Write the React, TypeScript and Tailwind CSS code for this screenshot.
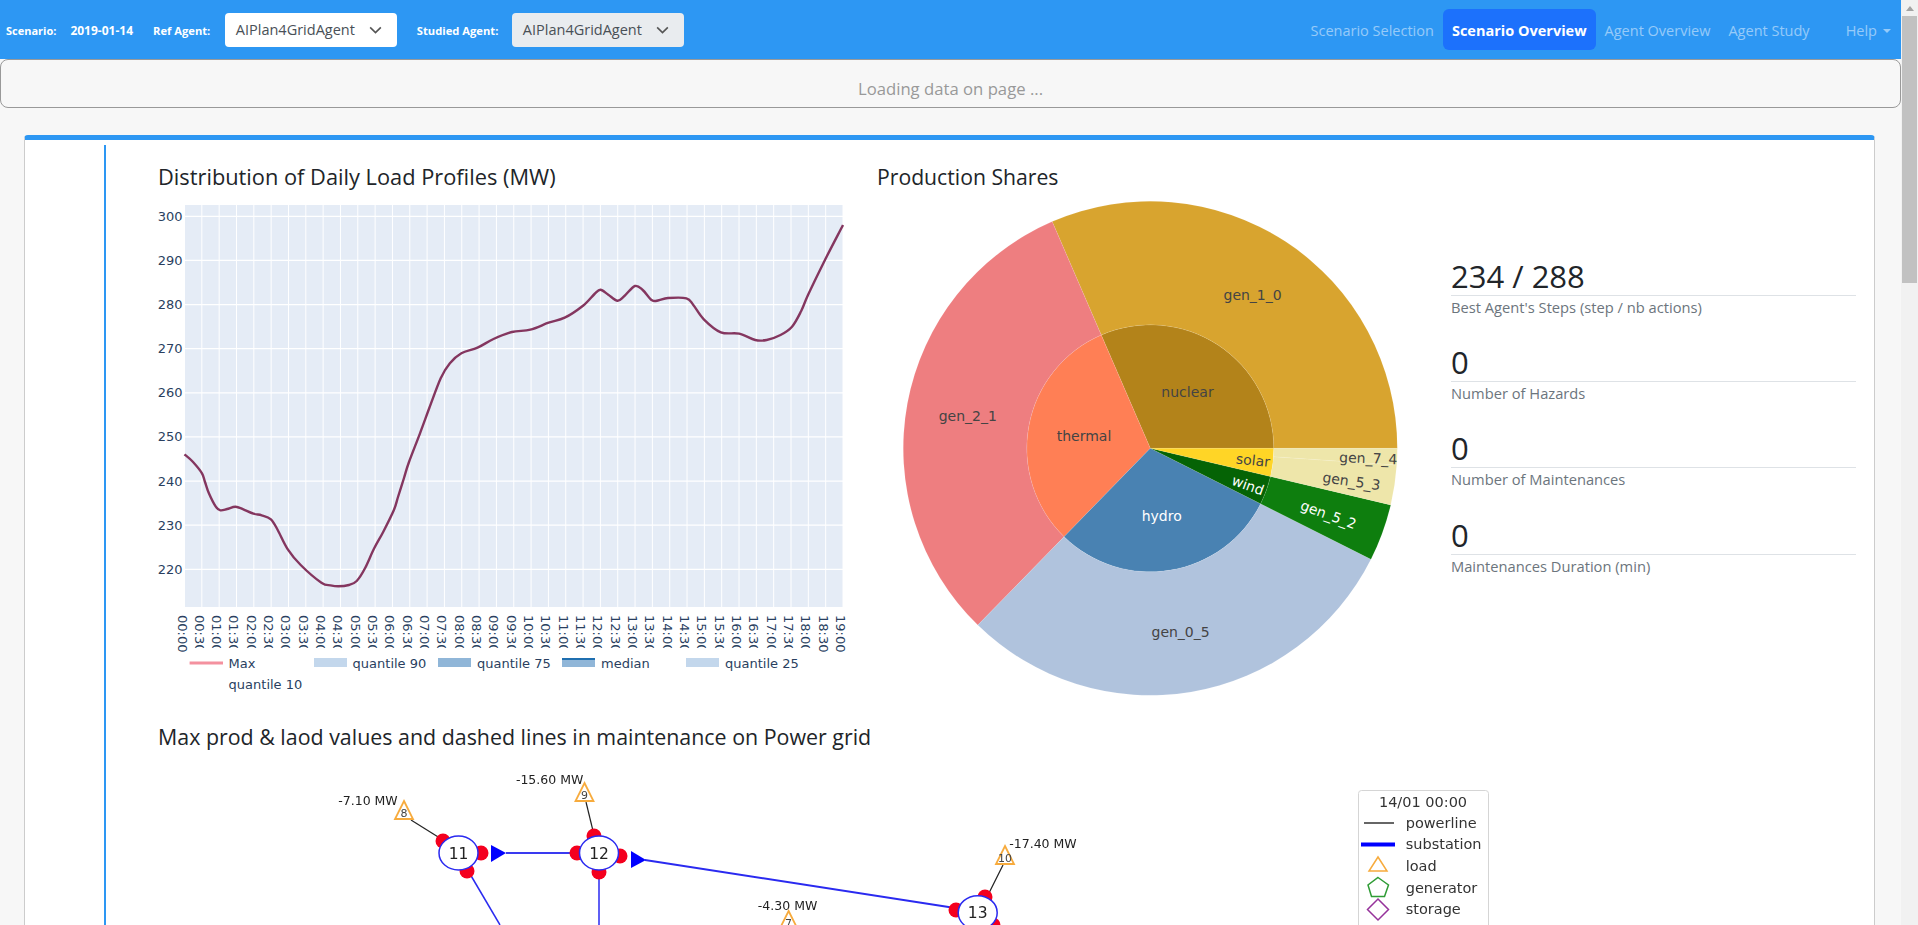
const FONT_UI = "font-['Open_Sans','Noto_Sans',sans-serif]";

const NAV_LINKS = [
  { label: "Scenario Selection" },
  { label: "Scenario Overview", active: true },
  { label: "Agent Overview" },
  { label: "Agent Study" },
];

const STATS = [
  { value: "234 / 288", label: "Best Agent's Steps (step / nb actions)" },
  { value: "0", label: "Number of Hazards" },
  { value: "0", label: "Number of Maintenances" },
  { value: "0", label: "Maintenances Duration (min)" },
];

// times on the x axis, every 30 minutes
const TICKS = Array.from({ length: 39 }, (_, i) => {
  const h = Math.floor(i / 2);
  return `${String(h).padStart(2, "0")}:${i % 2 ? "30" : "00"}`;
});

// curve traced from the plot, in page pixels
const CURVE: [number, number][] = [
  [184.5, 454.3], [192.8, 461.7], [202, 473.3], [205, 482], [208.9, 493.3], [215.8, 506.7],
  [220.4, 510.3], [227.2, 509], [235.5, 506.7], [243.3, 509.3], [253.4, 513.7], [261.7, 515.3],
  [270.9, 519.3], [277.7, 530], [287.8, 549.3], [300.7, 565], [321.4, 582.7], [330.5, 585.3],
  [338.3, 586.3], [348.9, 585], [356.7, 581], [365, 568.3], [374.2, 548.3], [383.3, 531.7],
  [393.9, 510], [398, 497], [404, 478], [409, 462], [420, 433.3], [429.3, 408], [440.7, 378.3],
  [449.9, 363.3], [461.4, 353.3], [477.5, 347.7], [493.5, 339], [511.9, 332], [530.3, 329.7],
  [548.6, 322.7], [564.7, 317.7], [583, 305.7], [594.5, 294], [600.5, 289.7], [608.3, 294.7],
  [617.5, 300.7], [624.4, 296], [634.9, 286], [642.7, 290], [652, 300.3], [658.8, 300.3],
  [668, 298], [686.4, 298.3], [693.3, 305], [703.8, 319.3], [720.8, 332.3], [739.2, 333.7],
  [755.2, 340], [766.7, 340], [780.5, 335], [792, 326.7], [801.2, 311], [808, 295],
  [824.1, 261.7], [843, 225],
];

function smoothPath(points: [number, number][]) {
  let d = `M${points[0][0]} ${points[0][1]}`;
  for (let i = 0; i < points.length - 1; i++) {
    const p0 = points[Math.max(0, i - 1)];
    const p1 = points[i];
    const p2 = points[i + 1];
    const p3 = points[Math.min(points.length - 1, i + 2)];
    const c1x = p1[0] + (p2[0] - p0[0]) / 6;
    const c1y = p1[1] + (p2[1] - p0[1]) / 6;
    const c2x = p2[0] - (p3[0] - p1[0]) / 6;
    const c2y = p2[1] - (p3[1] - p1[1]) / 6;
    d += ` C${c1x.toFixed(1)} ${c1y.toFixed(1)} ${c2x.toFixed(1)} ${c2y.toFixed(1)} ${p2[0]} ${p2[1]}`;
  }
  return d;
}

function LoadChart() {
  const left = 184.5;
  const right = 843;
  const top = 205;
  const bottom = 607;
  const step = (right - left) / 38;
  const yOf = (v: number) => 216.3 + (300 - v) * 4.4125;
  const values = [300, 290, 280, 270, 260, 250, 240, 230, 220];
  return (
    <svg viewBox="158 189 703 520" className="block h-[520px] w-[703px] font-['DejaVu_Sans',sans-serif]">
      <defs>
        <clipPath id="tick-clip">
          <rect x="150" y="610" width="720" height="38" />
        </clipPath>
      </defs>
      <rect x={left} y={top} width={right - left} height={bottom - top} fill="#e5ecf6" />
      {TICKS.map((_, i) => (
        <line key={i} x1={left + i * step} x2={left + i * step} y1={top} y2={bottom} stroke="#fff" strokeWidth="1" />
      ))}
      {values.map((v) => (
        <line key={v} x1={left} x2={right} y1={yOf(v)} y2={yOf(v)} stroke="#fff" strokeWidth="1.3" />
      ))}
      {values.map((v) => (
        <text key={v} x={left - 2} y={yOf(v) + 4.5} textAnchor="end" fontSize="13" fill="#2a3f5f">
          {v}
        </text>
      ))}
      <path d={smoothPath(CURVE)} fill="none" stroke="#84365f" strokeWidth="2.4" />
      {TICKS.map((t, i) => (
        <g key={t} clipPath={i > 0 && i < 37 ? "url(#tick-clip)" : undefined}>
          <text
            transform={`translate(${left + i * step - 7} 615) rotate(90)`}
            fontSize="13"
            fill="#2a3f5f"
          >
            {t}
          </text>
        </g>
      ))}
      {/* legend */}
      <line x1="189.6" x2="223" y1="663" y2="663" stroke="#f4919f" strokeWidth="3" />
      <rect x="314" y="658" width="33" height="9" fill="#c3d7ec" />
      <rect x="438" y="658" width="33" height="9" fill="#90b6d8" />
      <rect x="562" y="658" width="33" height="9" fill="#90b6d8" />
      <line x1="562" x2="595" y1="659" y2="659" stroke="#1f6fb0" strokeWidth="2" />
      <rect x="686" y="658" width="33" height="9" fill="#c3d7ec" />
      {[
        ["Max", 228.6, 667.5],
        ["quantile 90", 352.6, 667.5],
        ["quantile 75", 477, 667.5],
        ["median", 601, 667.5],
        ["quantile 25", 725, 667.5],
        ["quantile 10", 228.6, 688.5],
      ].map(([label, x, y]) => (
        <text key={label as string} x={x as number} y={y as number} fontSize="13" fill="#2a3f5f">
          {label}
        </text>
      ))}
    </svg>
  );
}

// annular sector, angles in degrees clockwise from east
function sector(r0: number, r1: number, a0: number, a1: number) {
  const cx = 273.3;
  const cy = 259.3;
  const pt = (r: number, a: number) => {
    const t = (a * Math.PI) / 180;
    return `${(cx + r * Math.cos(t)).toFixed(2)} ${(cy + r * Math.sin(t)).toFixed(2)}`;
  };
  const large = a1 - a0 > 180 ? 1 : 0;
  if (r0 === 0) return `M${cx} ${cy} L${pt(r1, a0)} A${r1} ${r1} 0 ${large} 1 ${pt(r1, a1)} Z`;
  return `M${pt(r0, a0)} L${pt(r1, a0)} A${r1} ${r1} 0 ${large} 1 ${pt(r1, a1)} L${pt(r0, a1)} A${r0} ${r0} 0 ${large} 0 ${pt(r0, a0)} Z`;
}

const R_IN = 123.5;
const R_OUT = 247;

const SECTORS = [
  { r0: 0, r1: R_IN, a0: 246.6, a1: 360, fill: "#b3831a" },
  { r0: R_IN, r1: R_OUT, a0: 246.6, a1: 360, fill: "#d8a42f" },
  { r0: 0, r1: R_IN, a0: 134.3, a1: 246.6, fill: "#ff7f55" },
  { r0: R_IN, r1: R_OUT, a0: 134.3, a1: 246.6, fill: "#ee7e80" },
  { r0: 0, r1: R_IN, a0: 26.7, a1: 134.3, fill: "#4982b2" },
  { r0: R_IN, r1: R_OUT, a0: 26.7, a1: 134.3, fill: "#b0c3dd" },
  { r0: 0, r1: R_IN, a0: 13.25, a1: 26.7, fill: "#056305" },
  { r0: R_IN, r1: R_OUT, a0: 13.25, a1: 26.7, fill: "#0e7e0e" },
  { r0: 0, r1: R_IN, a0: 0, a1: 13.25, fill: "#ffd526" },
  { r0: R_IN, r1: R_OUT, a0: 3.9, a1: 13.25, fill: "#eee6aa" },
  { r0: R_IN, r1: R_OUT, a0: 0, a1: 3.9, fill: "#eee6aa" },
];

const PIE_LABELS = [
  { t: "gen_1_0", x: 1252.6, y: 295, r: 0, c: "#444" },
  { t: "nuclear", x: 1187.5, y: 392.3, r: 0, c: "#444" },
  { t: "gen_2_1", x: 967.8, y: 416, r: 0, c: "#444" },
  { t: "thermal", x: 1084, y: 436, r: 0, c: "#444" },
  { t: "hydro", x: 1161.7, y: 516, r: 0, c: "#fff" },
  { t: "gen_0_5", x: 1180.6, y: 632.7, r: 0, c: "#444" },
  { t: "solar", x: 1253, y: 460.7, r: 6, c: "#444" },
  { t: "wind", x: 1247.8, y: 485.7, r: 20, c: "#fff" },
  { t: "gen_7_4", x: 1368.3, y: 458.7, r: 2, c: "#444" },
  { t: "gen_5_3", x: 1351.4, y: 481.7, r: 8, c: "#444" },
  { t: "gen_5_2", x: 1328.3, y: 515, r: 20, c: "#fff" },
];

function ProductionPie() {
  return (
    <svg viewBox="0 0 574 520" className="block h-[520px] w-[574px] font-['DejaVu_Sans',sans-serif]">
      {SECTORS.map((s, i) => (
        <path key={i} d={sector(s.r0, s.r1, s.a0, s.a1)} fill={s.fill} stroke="#fff" strokeOpacity="0.15" strokeWidth="0.6" />
      ))}
      {PIE_LABELS.map((l) => {
        const x = l.x - 877;
        const y = l.y - 189;
        return (
          <text
            key={l.t}
            x={x}
            y={y + 4.5}
            textAnchor="middle"
            fontSize="14"
            fill={l.c}
            transform={l.r ? `rotate(${l.r} ${x} ${y})` : undefined}
          >
            {l.t}
          </text>
        );
      })}
    </svg>
  );
}

function Node({ x, y, n, pins }: { x: number; y: number; n: number; pins: [number, number][] }) {
  return (
    <g>
      {pins.map(([px, py], i) => (
        <circle key={i} cx={px} cy={py} r="7.5" fill="#f4001e" />
      ))}
      <ellipse cx={x} cy={y} rx="19.5" ry="17" fill="#fff" stroke="#2a2af0" strokeWidth="1.5" />
      <text x={x} y={y + 5.5} textAnchor="middle" fontSize="15.5" fill="#222">
        {n}
      </text>
    </g>
  );
}

function Load({ x, y, n, label, lx, ly }: { x: number; y: number; n: number; label: string; lx: number; ly: number }) {
  return (
    <g>
      <polygon points={`${x},${y - 12} ${x + 9},${y + 6} ${x - 9},${y + 6}`} fill="none" stroke="#f7ab3d" strokeWidth="1.8" />
      <text x={x} y={y + 4} textAnchor="middle" fontSize="11" fill="#444">
        {n}
      </text>
      <text x={lx} y={ly} textAnchor="middle" fontSize="12.5" fill="#222">
        {label}
      </text>
    </g>
  );
}

function GridPlot() {
  return (
    <svg viewBox="158 749 1400 176" className="block h-[176px] w-[1400px] blur-[0.35px] font-['DejaVu_Sans',sans-serif]">
      <line x1="411" y1="820" x2="443" y2="840" stroke="#222" strokeWidth="1.2" />
      <line x1="586" y1="802" x2="594" y2="835" stroke="#222" strokeWidth="1.2" />
      <line x1="1003" y1="865" x2="988" y2="895" stroke="#222" strokeWidth="1.2" />
      <line x1="506" y1="853" x2="575" y2="853" stroke="#3a3af0" strokeWidth="2" />
      <line x1="645" y1="860" x2="955" y2="908" stroke="#2a2af0" strokeWidth="2" />
      <line x1="470.6" y1="875" x2="500" y2="925" stroke="#2a2af0" strokeWidth="1.5" />
      <line x1="599" y1="877" x2="599" y2="925" stroke="#2a2af0" strokeWidth="1.5" />
      <polygon points="491,845 491,862 506,853" fill="#0000ff" />
      <polygon points="631,851 631,868 646,860" fill="#0000ff" />
      <Node x={458.5} y={853} n={11} pins={[[443, 841], [481, 853], [467, 871]]} />
      <Node x={599} y={853} n={12} pins={[[594, 836], [577, 853], [620, 856], [599, 872]]} />
      <Node x={977.7} y={912.7} n={13} pins={[[985, 897], [956, 910], [993, 925]]} />
      <Load x={404} y={813} n={8} label="-7.10 MW" lx={368} ly={805} />
      <Load x={584.5} y={795} n={9} label="-15.60 MW" lx={549.6} ly={784} />
      <Load x={1005} y={858} n={10} label="-17.40 MW" lx={1043} ly={848} />
      <Load x={788.6} y={923} n={7} label="-4.30 MW" lx={787.6} ly={910} />
      {/* legend */}
      <rect x="1358.5" y="790.5" width="130" height="170" rx="3" fill="#fff" stroke="#d5d5d5" />
      <text x="1423" y="807" textAnchor="middle" fontSize="14.5" fill="#333">
        14/01 00:00
      </text>
      <line x1="1364" x2="1394" y1="823" y2="823" stroke="#333" strokeWidth="1.5" />
      <line x1="1361" x2="1395" y1="844.5" y2="844.5" stroke="#0000ff" strokeWidth="4" />
      <polygon points="1378,857 1387,871 1369,871" fill="none" stroke="#f7ab3d" strokeWidth="1.5" />
      <polygon points="1378,877.5 1388.5,885 1384.5,896.5 1371.5,896.5 1368,885" fill="none" stroke="#2f9c35" strokeWidth="1.5" />
      <polygon points="1378,899 1388.5,909.5 1378,920 1367.5,909.5" fill="none" stroke="#96339b" strokeWidth="1.5" />
      {[
        ["powerline", 827.5],
        ["substation", 849],
        ["load", 870.5],
        ["generator", 892.5],
        ["storage", 914],
      ].map(([t, y]) => (
        <text key={t as string} x="1405.7" y={y as number} fontSize="14.5" fill="#333">
          {t}
        </text>
      ))}
    </svg>
  );
}

function AgentSelect({ label, disabled }: { label: string; disabled?: boolean }) {
  return (
    <div className={`flex h-[34px] w-[171.5px] items-center justify-between rounded pl-[10.5px] pr-[15px] text-[14.5px] text-[#495057] ${disabled ? "bg-[#e9ecef]" : "bg-white"}`}>
      <span>{label}</span>
      <svg viewBox="0 0 14 9" className="h-[8px] w-[13px]" fill="none" stroke="#555" strokeWidth="1.8">
        <path d="M1 1.5 7 7.5 13 1.5" />
      </svg>
    </div>
  );
}

export default function App() {
  return (
    <div className={`flex h-[925px] w-full overflow-hidden bg-[#f7f7f7] ${FONT_UI}`}>
      <div className="min-w-0 flex-1">
        <nav className="flex h-[59px] items-center bg-[#2d97f3] pl-[6px] pr-[10px]">
          <span className="pt-[3px] text-[11px] font-bold text-white">Scenario:</span>
          <span className="ml-[14px] pt-[3px] text-[12px] font-bold text-white">2019-01-14</span>
          <span className="ml-[20px] pt-[3px] text-[11.2px] font-bold text-white">Ref Agent:</span>
          <div className="ml-[15px]">
            <AgentSelect label="AIPlan4GridAgent" />
          </div>
          <span className="ml-[20px] pt-[3px] text-[11.2px] font-bold text-white">Studied Agent:</span>
          <div className="ml-[14px]">
            <AgentSelect label="AIPlan4GridAgent" disabled />
          </div>
          <div className="ml-auto flex items-center">
            {NAV_LINKS.map((l) => (
              <a
                key={l.label}
                className={`flex h-[41px] items-center rounded-md px-[9px] pt-[2px] text-[14.5px] ${l.active ? "bg-[#1c71fc] font-bold text-white" : "text-white/50"}`}
              >
                {l.label}
              </a>
            ))}
            <a className="ml-[27px] flex items-center pt-[2px] text-[14.5px] text-white/50">
              Help
              <span className="ml-[6px] h-0 w-0 border-x-[4px] border-t-[4px] border-x-transparent border-t-white/50" />
            </a>
          </div>
        </nav>

        <div className="flex h-[49px] items-center justify-center rounded-lg border border-[#999] bg-[#f7f7f7] pt-[10px] text-[16.7px] text-[#999]">
          Loading data on page ...
        </div>

        <div className="ml-[24px] mr-[26px] mt-[27px] rounded-t border-x border-t-[5px] border-x-[#ccc] border-t-[#2d97f3] bg-white pl-[79px] pt-[5px]">
          <div className="border-l-2 border-[#2d97f3] pl-[52px] pt-[20px]">
            <div className="flex items-start">
              <div className="w-[719px]">
                <h5 className="text-[21.8px] leading-6 text-[#212529]">Distribution of Daily Load Profiles (MW)</h5>
                <LoadChart />
              </div>
              <div className="w-[574px]">
                <h5 className="text-[21.2px] leading-6 text-[#212529]">Production Shares</h5>
                <ProductionPie />
              </div>
              <div className="w-[405px] pt-[93.5px]">
                {STATS.map((s) => (
                  <div key={s.label} className="mb-[27.4px]">
                    <div className="border-b border-[#dee2e6] pb-[2px] text-[31px] leading-[34px] text-[#212529]">{s.value}</div>
                    <div className="mb-[1px] mt-[1px] text-[14.7px] leading-[21px] text-[#6c757d]">{s.label}</div>
                  </div>
                ))}
              </div>
            </div>
            <h5 className="mt-[16px] text-[21.4px] leading-6 text-[#212529]">Max prod &amp; laod values and dashed lines in maintenance on Power grid</h5>
            <GridPlot />
          </div>
        </div>
      </div>

      {/* window scrollbar */}
      <div className="w-[17px] shrink-0 bg-[#f1f1f1]">
        <div className="flex h-[16px] items-center justify-center">
          <span className="h-0 w-0 border-x-[4px] border-b-[5px] border-x-transparent border-b-[#a3a3a3]" />
        </div>
        <div className="mx-auto h-[267px] w-[15px] bg-[#c1c1c1]" />
      </div>
    </div>
  );
}
